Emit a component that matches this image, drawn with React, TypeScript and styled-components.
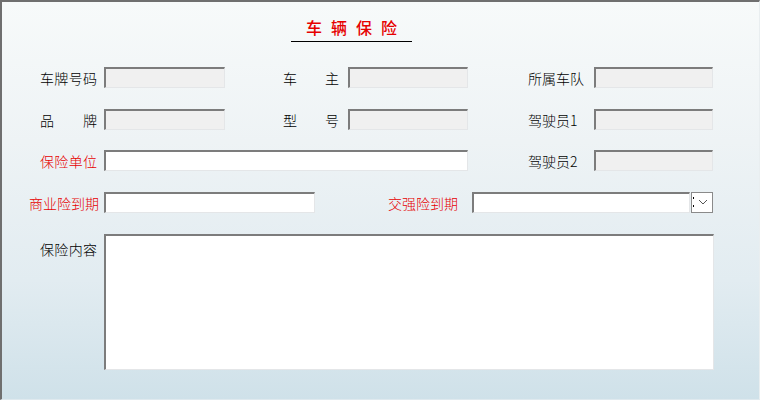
import React from "react";
import styled, { createGlobalStyle } from "styled-components";

const Global = createGlobalStyle`
  html, body { margin: 0; padding: 0; }
  body { font-family: "Noto Sans CJK SC", "Liberation Sans", sans-serif; }
`;

const Window = styled.div`
  box-sizing: border-box;
  width: 760px;
  height: 400px;
  border-top: 2px solid #6f6f6f;
  border-left: 2px solid #6f6f6f;
  border-right: 1px solid #e9eef0;
  border-bottom: 1px solid #dfe9ee;
  background: linear-gradient(180deg, #f7fafa 0%, #eef3f5 35%, #e2ecf1 70%, #cfe1e9 100%);
  font-family: "Noto Sans CJK SC", "Liberation Sans", sans-serif;
  font-size: 14px;
  font-weight: 300;
  color: #000;
  overflow: hidden;
`;

const TitleBar = styled.div`
  display: flex;
  padding: 16px 0 0 289px;
`;

const Title = styled.div`
  width: 121px;
  box-sizing: border-box;
  padding: 0 0 5px 9px;
  border-bottom: 1px solid #000;
  text-align: center;
  color: #e60000;
  font-weight: 500;
  font-size: 16px;
  line-height: 18px;
  letter-spacing: 9px;
`;

const Row = styled.div<{ $top: number; $pad?: number; $align?: string; $h?: number }>`
  display: flex;
  align-items: ${(p) => p.$align ?? "center"};
  height: ${(p) => p.$h ?? 21}px;
  margin-top: ${(p) => p.$top}px;
  padding-left: ${(p) => p.$pad ?? 38}px;
`;

const Label = styled.div<{ $w: number; $spread?: boolean; $red?: boolean; $right?: boolean; $gap: number; $padTop?: number }>`
  flex: none;
  width: ${(p) => p.$w}px;
  margin-right: ${(p) => p.$gap}px;
  padding-top: ${(p) => p.$padTop ?? 0}px;
  white-space: nowrap;
  line-height: 16px;
  color: ${(p) => (p.$red ? "#e60000" : "#000")};
  text-align: ${(p) => (p.$spread ? "justify" : p.$right ? "right" : "left")};
  text-align-last: ${(p) => (p.$spread ? "justify" : p.$right ? "right" : "left")};
`;

const Input = styled.div<{ $w: number; $ro?: boolean }>`
  flex: none;
  box-sizing: border-box;
  width: ${(p) => p.$w}px;
  height: 21px;
  border-style: solid;
  border-width: 2px 1px 1px 2px;
  border-color: #7c7c7c #e4e6e8 #e4e6e8 #7c7c7c;
  background: ${(p) => (p.$ro ? "#f0f0f0" : "#ffffff")};
`;

const TextArea = styled.div`
  flex: none;
  box-sizing: border-box;
  width: 610px;
  height: 136px;
  border-style: solid;
  border-width: 2px 1px 1px 2px;
  border-color: #7c7c7c #e4e6e8 #e4e6e8 #7c7c7c;
  background: #fff;
`;

const Spacer = styled.div<{ $w: number }>`
  flex: none;
  width: ${(p) => p.$w}px;
`;

const DropButton = styled.div`
  flex: none;
  box-sizing: border-box;
  width: 22px;
  height: 21px;
  margin-left: 1px;
  border: 1px solid #8a8a8a;
  background: #fff;
  display: flex;
  align-items: center;
  justify-content: center;
`;

export default function App() {
  return (
    <>
      <Global />
      <Window>
        <TitleBar>
          <Title>车辆保险</Title>
        </TitleBar>

        <Row $top={25}>
          <Label $w={57} $gap={7} $spread>车牌号码</Label>
          <Input $w={121} $ro />
          <Spacer $w={58} />
          <Label $w={56} $gap={9} $spread>车主</Label>
          <Input $w={120} $ro />
          <Spacer $w={60} />
          <Label $w={56} $gap={10} $spread>所属车队</Label>
          <Input $w={119} $ro />
        </Row>

        <Row $top={21}>
          <Label $w={57} $gap={7} $spread>品牌</Label>
          <Input $w={121} $ro />
          <Spacer $w={58} />
          <Label $w={56} $gap={9} $spread>型号</Label>
          <Input $w={120} $ro />
          <Spacer $w={60} />
          <Label $w={56} $gap={10}>驾驶员1</Label>
          <Input $w={119} $ro />
        </Row>

        <Row $top={20}>
          <Label $w={57} $gap={7} $spread $red>保险单位</Label>
          <Input $w={364} />
          <Spacer $w={60} />
          <Label $w={56} $gap={10}>驾驶员2</Label>
          <Input $w={119} $ro />
        </Row>

        <Row $top={21} $pad={27}>
          <Label $w={70} $gap={5} $right $red>商业险到期</Label>
          <Input $w={211} />
          <Spacer $w={73} />
          <Label $w={71} $gap={13} $red>交强险到期</Label>
          <Input $w={218} />
          <DropButton>
            <svg width="20" height="19" viewBox="0 0 20 19">
              <rect x="1" y="4" width="1" height="2" fill="#000" />
              <rect x="1" y="12" width="1" height="2" fill="#000" />
              <path d="M7 7 L11 11 L15 7" fill="none" stroke="#555" strokeWidth="1" />
            </svg>
          </DropButton>
        </Row>

        <Row $top={21} $align="flex-start" $h={136}>
          <Label $w={57} $gap={7} $spread $padTop={7}>保险内容</Label>
          <TextArea />
        </Row>
      </Window>
    </>
  );
}
